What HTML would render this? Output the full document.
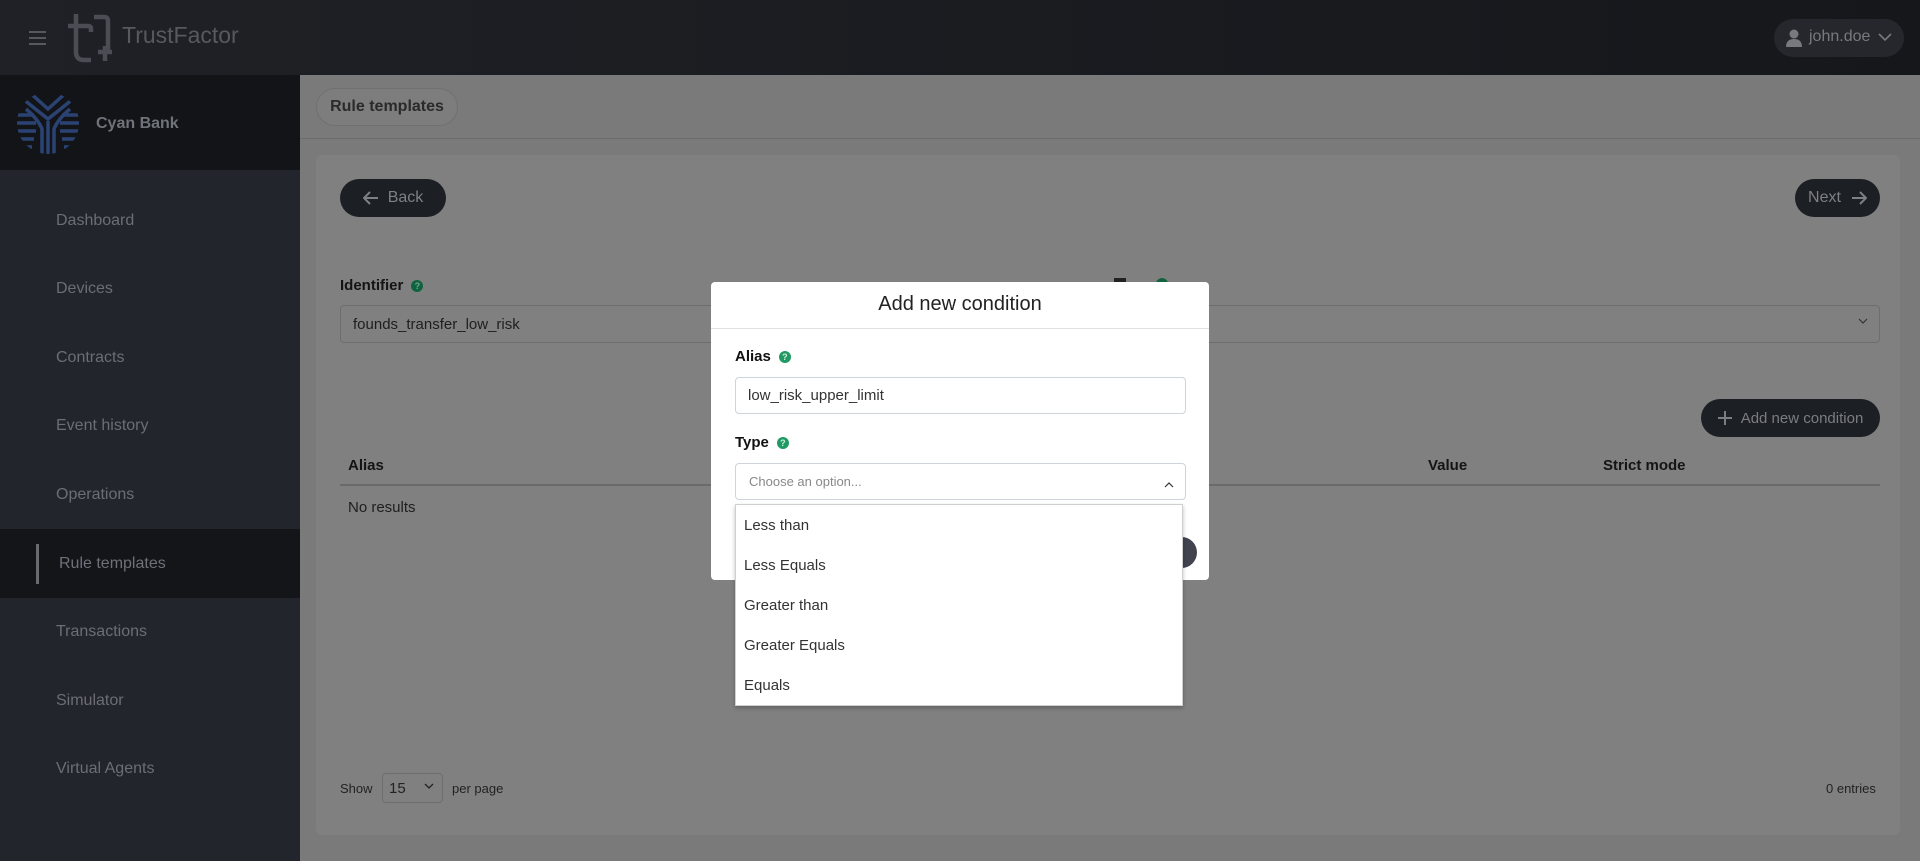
<!DOCTYPE html>
<html><head><meta charset="utf-8"><style>
*{box-sizing:border-box;margin:0;padding:0}
body{width:1920px;height:861px;overflow:hidden;background:#7a7a7a;font-family:"Liberation Sans",sans-serif;position:relative}
.a{position:absolute}
.hdr{left:0;top:0;width:1920px;height:75px;background:linear-gradient(90deg,#1f2126,#15171b)}
.side{left:0;top:75px;width:300px;height:786px;background:#22252c}
.brand{left:0;top:75px;width:300px;height:95px;background:#131418}
.mi{position:absolute;left:56px;font-size:16px;color:#6b6e73}
.card{left:316px;top:155px;width:1584px;height:680px;background:#808080;border-radius:6px}
.btn{background:#1c1f24;border-radius:20px;color:#7d8085;font-size:16px;display:flex;align-items:center;justify-content:center}
.lbl{font-weight:bold;font-size:15px;color:#141414}
.q{display:inline-block;width:12px;height:12px;border-radius:50%;background:#11623f;color:#6fa88a;font-size:9px;text-align:center;line-height:12px;vertical-align:1px;margin-left:8px}
.qm{background:#1f9a63;color:#cdeedd}
.inp{border:1px solid #6e6e6e;border-radius:4px}
.modal{left:711px;top:282px;width:498px;height:298px;background:#fff;border-radius:4px}
.dd{left:735px;top:504px;width:448px;height:202px;background:#fff;border:1px solid #cfcfcf;box-shadow:0 2px 4px rgba(0,0,0,.25)}
.opt{position:absolute;left:8px;font-size:15px;color:#333}
</style></head><body>
<div class="a hdr"></div>
<div class="a" style="left:29px;top:31px;width:17px;height:2px;background:#55585e;box-shadow:0 6px 0 #55585e,0 12px 0 #55585e"></div>
<svg class="a" style="left:66px;top:12px" width="50" height="52" viewBox="0 0 50 52" fill="none" stroke="#4a4d53" stroke-width="4.5">
<path d="M10 2V40Q10 48 18 48H25"/><path d="M2 14H22Q25 14 25 17V20"/><path d="M28 5H38Q42 5 42 9V38"/><path d="M32 40H46M39 34V49"/></svg>
<div class="a" style="left:122px;top:22px;font-size:23px;color:#56595f">TrustFactor</div>
<div class="a" style="left:1774px;top:19px;width:130px;height:38px;border-radius:19px;background:#25272d"></div>
<svg class="a" style="left:1786px;top:29px" width="16" height="18" viewBox="0 0 16 18" fill="#76797e"><circle cx="8" cy="5" r="4.5"/><path d="M0 18Q0 10 8 10Q16 10 16 18Z"/></svg>
<div class="a" style="left:1809px;top:28px;font-size:16px;color:#76797e">john.doe</div>
<svg class="a" style="left:1878px;top:33px" width="14" height="9" viewBox="0 0 14 9" fill="none" stroke="#76797e" stroke-width="1.6"><path d="M1 1L7 7L13 1"/></svg>

<div class="a side"></div>
<div class="a brand"></div>
<svg class="a" style="left:16px;top:91px" width="64" height="64" viewBox="0 0 64 64">
<defs><clipPath id="c"><circle cx="32" cy="32" r="31"/></clipPath></defs>
<g clip-path="url(#c)" fill="none" stroke="#2b4372" stroke-width="3.5">
<path d="M0 24H18M0 32H20M0 40H20M0 48H18M0 56H16"/><path d="M46 24H64M44 32H64M44 40H64M46 48H64M48 56H64"/>
<path d="M2 4L32 28L62 4M12 0L32 18L52 0"/>
<path d="M26 64V38Q22 28 10 18M38 64V38Q42 28 54 18M32 30V64"/></g></svg>
<div class="a" style="left:96px;top:115px;font-size:16px;font-weight:bold;color:#6f737a">Cyan Bank</div>
<div class="mi" style="top:212px">Dashboard</div>
<div class="mi" style="top:280px">Devices</div>
<div class="mi" style="top:349px">Contracts</div>
<div class="mi" style="top:417px">Event history</div>
<div class="mi" style="top:486px">Operations</div>
<div class="a" style="left:0;top:529px;width:300px;height:69px;background:#141518"></div>
<div class="a" style="left:36px;top:544px;width:3px;height:40px;background:#6b6b6b"></div>
<div class="mi" style="top:555px;left:59px;color:#6c717a">Rule templates</div>
<div class="mi" style="top:623px">Transactions</div>
<div class="mi" style="top:692px">Simulator</div>
<div class="mi" style="top:760px">Virtual Agents</div>

<div class="a" style="left:316px;top:88px;width:142px;height:38px;border:1px solid #707070;border-radius:19px;background:#7d7d7d;font-size:16px;font-weight:bold;color:#2a2a2a;text-align:center;line-height:36px">Rule templates</div>
<div class="a" style="left:300px;top:138px;width:1620px;height:1px;background:#6c6c6c"></div>
<div class="a card"></div>
<div class="a btn" style="left:340px;top:179px;width:106px;height:38px"><svg width="16" height="14" viewBox="0 0 16 14" fill="none" stroke="#7d8085" stroke-width="2" style="margin-right:9px"><path d="M15 7H2M7 1L1 7L7 13"/></svg>Back</div>
<div class="a btn" style="left:1795px;top:179px;width:85px;height:38px">Next<svg width="16" height="14" viewBox="0 0 16 14" fill="none" stroke="#7d8085" stroke-width="2" style="margin-left:10px"><path d="M1 7H14M9 1L15 7L9 13"/></svg></div>
<div class="a lbl" style="left:340px;top:277px">Identifier<span class="q">?</span></div>
<div class="a inp" style="left:340px;top:305px;width:1540px;height:38px"></div>
<div class="a" style="left:353px;top:316px;font-size:15px;color:#1e1e1e">founds_transfer_low_risk</div>
<svg class="a" style="left:1858px;top:318px" width="10" height="7" viewBox="0 0 10 7" fill="none" stroke="#333" stroke-width="1.2"><path d="M1 1L5 5L9 1"/></svg>
<div class="a btn" style="left:1701px;top:399px;width:179px;height:38px;border-radius:19px;color:#7a7d82;font-size:15px"><svg width="14" height="14" viewBox="0 0 14 14" stroke="#7a7d82" stroke-width="2" style="margin-right:9px"><path d="M7 0V14M0 7H14"/></svg>Add new condition</div>
<div class="a lbl" style="left:348px;top:457px">Alias</div>
<div class="a lbl" style="left:1428px;top:457px">Value</div>
<div class="a lbl" style="left:1603px;top:457px">Strict mode</div>
<div class="a" style="left:340px;top:484px;width:1540px;height:2px;background:#6a6a6a"></div>
<div class="a" style="left:348px;top:499px;font-size:15px;color:#1e1e1e">No results</div>
<div class="a" style="left:340px;top:781px;font-size:13px;color:#222">Show</div>
<div class="a inp" style="left:382px;top:773px;width:61px;height:30px;border-radius:4px"></div>
<div class="a" style="left:389px;top:780px;font-size:15px;color:#222">15</div>
<svg class="a" style="left:424px;top:783px" width="10" height="7" viewBox="0 0 10 7" fill="none" stroke="#222" stroke-width="1.3"><path d="M1 1L5 5L9 1"/></svg>
<div class="a" style="left:452px;top:781px;font-size:13px;color:#222">per page</div>
<div class="a" style="left:1826px;top:781px;font-size:13px;color:#222">0 entries</div>
<div class="a" style="left:1114px;top:278px;width:12px;height:8px;background:#222"></div>
<div class="a" style="left:1156px;top:278px;width:12px;height:8px;border-radius:6px 6px 0 0;background:#11623f"></div>

<div class="a modal"></div>
<div class="a" style="left:711px;top:293px;width:498px;text-align:center;font-size:20px;color:#222">Add new condition</div>
<div class="a" style="left:711px;top:328px;width:498px;height:1px;background:#e2e2e2"></div>
<div class="a lbl" style="left:735px;top:348px;color:#111">Alias<span class="q qm">?</span></div>
<div class="a" style="left:735px;top:377px;width:451px;height:37px;border:1px solid #cfd4da;border-radius:4px"></div>
<div class="a" style="left:748px;top:387px;font-size:15px;color:#333">low_risk_upper_limit</div>
<div class="a lbl" style="left:735px;top:434px;color:#111">Type<span class="q qm">?</span></div>
<div class="a" style="left:735px;top:463px;width:451px;height:37px;border:1px solid #cfd4da;border-radius:4px"></div>
<div class="a" style="left:749px;top:474px;font-size:13px;color:#888">Choose an option...</div>
<svg class="a" style="left:1164px;top:481px" width="10" height="7" viewBox="0 0 10 7" fill="none" stroke="#333" stroke-width="1.2"><path d="M1 6L5 2L9 6"/></svg>
<div class="a" style="left:1165px;top:537px;width:32px;height:31px;border-radius:16px;background:#41444f"></div>
<div class="a dd">
<div class="opt" style="top:12px">Less than</div>
<div class="opt" style="top:52px">Less Equals</div>
<div class="opt" style="top:92px">Greater than</div>
<div class="opt" style="top:132px">Greater Equals</div>
<div class="opt" style="top:172px">Equals</div>
</div>
</body></html>
